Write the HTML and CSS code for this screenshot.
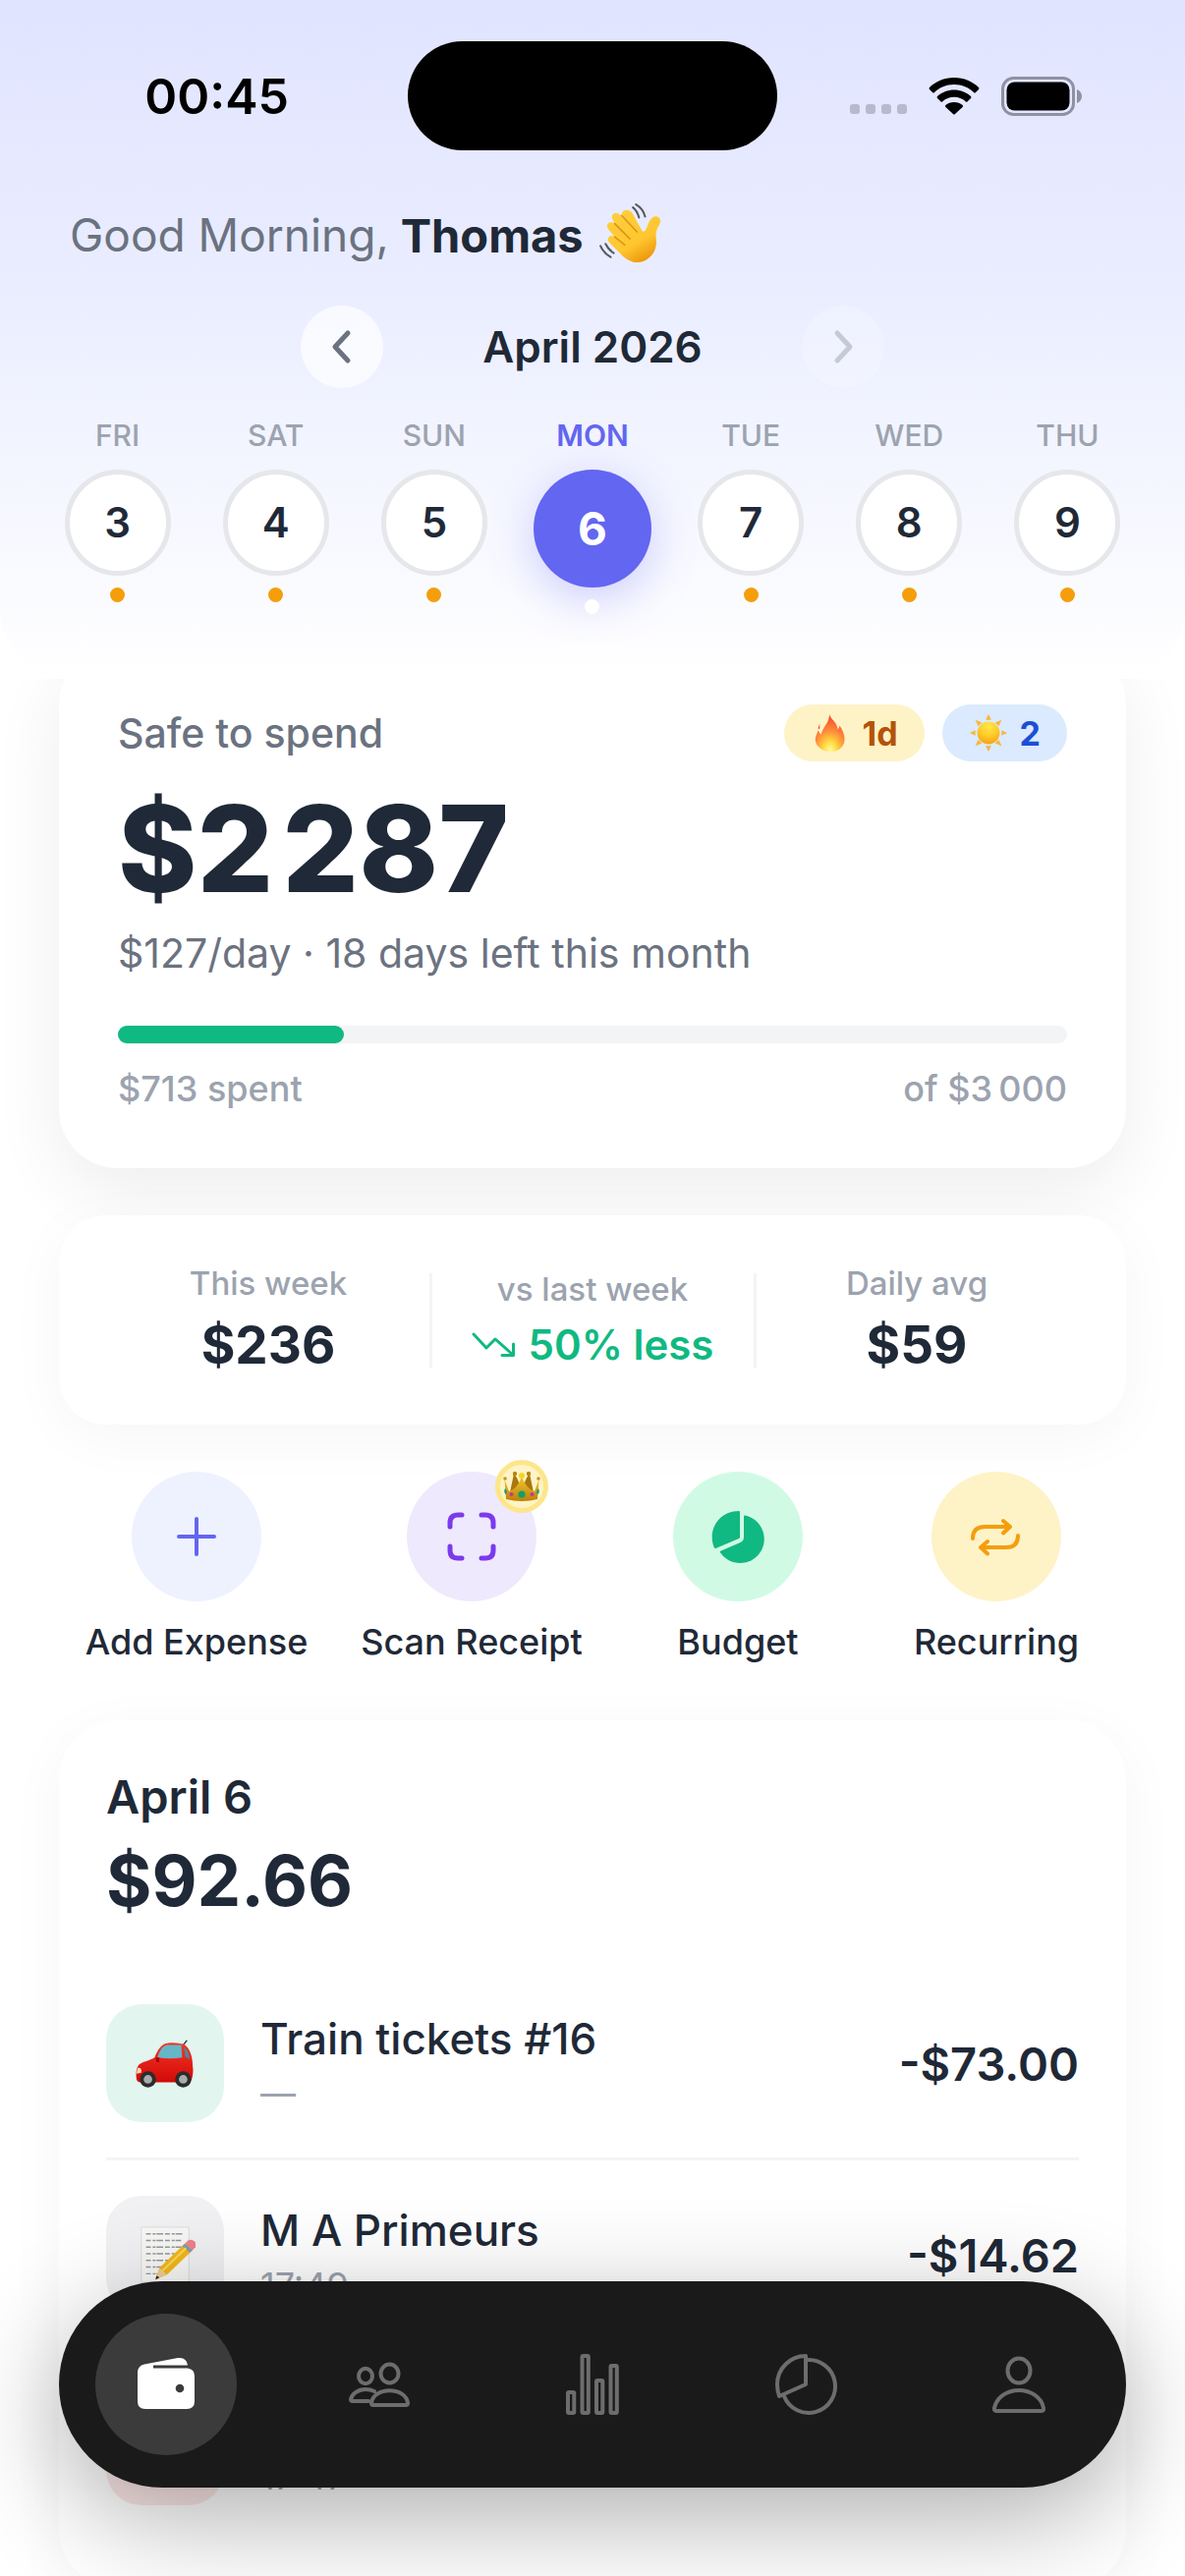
FILE: index.html
```html
<!DOCTYPE html>
<html lang="en">
<head>
<meta charset="utf-8">
<meta name="viewport" content="width=device-width, initial-scale=1">
<title>Safe to spend</title>
<link rel="stylesheet" href="styles.css">
</head>
<body>
<div class="app">
  <header class="header">
    <div class="header-bg">
      <div class="status">
        <time class="status-time">00:45</time>
        <div class="island"></div>
        <div class="status-icons">
          <span class="signal"><i></i><i></i><i></i><i></i></span>
          <svg class="wifi" viewBox="0 0 52 38" aria-hidden="true"><path d="M26 0C36 0 45 4 51 10q1 1 0 2l-3 3q-1 1-2 0C41 10 34 7 26 7S11 10 6 15q-1 1-2 0L1 12q-1-1 0-2C7 4 16 0 26 0Z"/><path d="M26 12.500c6.500 0 12.500 2.500 17 6.500q1 1 0 2l-3.300 3.300q-1 1-2 0C34.500 21.500 30.500 19.800 26 19.800s-8.500 1.700-11.700 4.500q-1 1-2 0L9 21q-1-1 0-2c4.500-4 10.500-6.500 17-6.500Z"/><path d="M26 25c3.400 0 6.400 1.200 8.600 3q1 1 0 2l-7.600 7q-1 1-2 0l-7.600-7q-1-1 0-2c2.200-1.800 5.200-3 8.600-3Z"/></svg>
          <svg class="battery" viewBox="0 0 82 40" aria-hidden="true"><rect x="1.500" y="1.500" width="72" height="37" rx="11" fill="none" stroke="#8f91a3" stroke-width="3"/><rect x="5.500" y="5.500" width="64" height="29" rx="8"/><path d="M77 13c3 1 5 4 5 7s-2 6-5 7Z" fill="#8f91a3"/></svg>
        </div>
      </div>
      <h1 class="greeting">Good Morning, <strong>Thomas</strong>
        <svg class="wave" viewBox="0 0 64 64" role="img" aria-label="waving hand"><defs><linearGradient id="hand" x1="0" y1="0" x2=".6" y2="1"><stop offset="0" stop-color="#ffd040"/><stop offset=".7" stop-color="#ffc62e"/><stop offset="1" stop-color="#f09a10"/></linearGradient></defs><g fill="none" stroke="#555962" stroke-width="2" stroke-linecap="round"><path d="M37 5q4 3 6 10M40 2q7 4 9 12M10 41q3 6 8 9M5 43q3 7 10 11"/></g><path d="M46 28q1 1 3 0c2-2 2-5 4-9 2-4 5-6 8-5 3 1 4 4 2 8-3 5-4 9-3 15 1 11-6 20-16 22-7 1-12-2-17-6L14 40c-4-4 0-9 5-6l-6-7c-4-5 1-10 6-6l-2-4c-3-5 3-9 7-5l2 1c-1-5 6-8 10-3Z" fill="url(#hand)"/><path d="M19 34l10 8M19 21l15 15M26 13l15 16" stroke="#dc9417" stroke-width="1.500" stroke-linecap="round"/></svg>
      </h1>
      <div class="month">
        <button class="month-btn" type="button" aria-label="Previous week"><svg viewBox="0 0 36 36"><path d="M24 4 11 18l13 14"/></svg></button>
        <h2 class="month-name">April 2026</h2>
        <button class="month-btn" type="button" aria-label="Next week" disabled><svg viewBox="0 0 36 36"><path d="m12 4 13 14-13 14"/></svg></button>
      </div>
      <div class="week">
        <button class="day" type="button"><span class="day-name">FRI</span><span class="day-num">3</span><i class="day-dot"></i></button>
        <button class="day" type="button"><span class="day-name">SAT</span><span class="day-num">4</span><i class="day-dot"></i></button>
        <button class="day" type="button"><span class="day-name">SUN</span><span class="day-num">5</span><i class="day-dot"></i></button>
        <button class="day day-active" type="button" aria-current="date"><span class="day-name">MON</span><span class="day-num">6</span><i class="day-dot"></i></button>
        <button class="day" type="button"><span class="day-name">TUE</span><span class="day-num">7</span><i class="day-dot"></i></button>
        <button class="day" type="button"><span class="day-name">WED</span><span class="day-num">8</span><i class="day-dot"></i></button>
        <button class="day" type="button"><span class="day-name">THU</span><span class="day-num">9</span><i class="day-dot"></i></button>
      </div>
    </div>
  </header>

  <main class="content">
    <section class="card summary">
      <div class="summary-top">
        <h2 class="summary-title">Safe to spend</h2>
        <div class="badges">
          <span class="badge badge-fire">
            <svg class="badge-icon" viewBox="0 0 42 42" role="img" aria-label="streak"><defs><radialGradient id="fire" cx=".5" cy=".95" r=".95"><stop offset="0" stop-color="#fff9a0"/><stop offset=".25" stop-color="#ffd83b"/><stop offset=".55" stop-color="#ff8a3a"/><stop offset="1" stop-color="#f4402a"/></radialGradient></defs><path d="M20 1c1 5 8 8 9 16 1-1 2-3 2-4 4 6 6 12 5 17-1 7-7 11-15 11S6 36 5 29c0-5 2-7 3-11 1 2 2 3 3 5 2-9 9-12 9-22Z" fill="url(#fire)"/><path d="M10 11q-2 3-2 6l2-1q-1-2 0-5Z" fill="#f4402a"/></svg>
            1d
          </span>
          <span class="badge badge-sun">
            <svg class="badge-icon" viewBox="0 0 42 42" role="img" aria-label="sun"><defs><radialGradient id="sun" cx=".5" cy=".2" r=".9"><stop offset="0" stop-color="#ffe94a"/><stop offset=".5" stop-color="#ffc928"/><stop offset="1" stop-color="#f29a0c"/></radialGradient></defs><circle cx="21" cy="21" r="12" fill="url(#sun)"/><path d="m21 1 3 6h-6ZM21 41l3-6h-6ZM1 21l6-3v6ZM41 21l-6-3v6ZM7 7l7 3-4 4ZM35 7l-7 3 4 4ZM7 35l7-3-4-4ZM35 35l-7-3 4-4Z" fill="#f6b73a"/></svg>
            2
          </span>
        </div>
      </div>
      <p class="summary-amount">$2&#8202;287</p>
      <p class="summary-note">$127/day · 18 days left this month</p>
      <div class="bar" role="progressbar" aria-label="Budget used" aria-valuemin="0" aria-valuemax="3000" aria-valuenow="713"><div class="bar-fill" style="width: 23.8%"></div></div>
      <div class="bar-labels"><span>$713 spent</span><span>of $3&#8239;000</span></div>
    </section>

    <section class="card stats">
      <div class="stat"><span class="stat-label">This week</span><strong class="stat-value">$236</strong></div>
      <div class="stat"><span class="stat-label">vs last week</span><strong class="stat-value stat-trend"><svg class="trend" viewBox="0 0 44 26" aria-hidden="true"><path d="m2 2 13 14 9-9 18 16M31 23.500h11.500V12"/></svg>50% less</strong></div>
      <div class="stat"><span class="stat-label">Daily avg</span><strong class="stat-value">$59</strong></div>
    </section>

    <section class="actions">
      <button class="action" type="button">
        <span class="action-icon action-add"><svg class="icon" viewBox="0 0 72 72"><path d="M36 18v36M18 36h36"/></svg></span>Add Expense
      </button>
      <button class="action" type="button">
        <span class="action-icon action-scan"><svg class="icon" viewBox="0 0 72 72"><path d="M14 26v-4q0-8 8-8h4M46 14h4q8 0 8 8v4M58 46v4q0 8-8 8h-4M26 58h-4q-8 0-8-8v-4"/></svg>
          <span class="crown"><svg viewBox="0 0 38 32" role="img" aria-label="premium"><defs><linearGradient id="gold" x1="0" x2="0" y1="0" y2="1"><stop offset="0" stop-color="#f3c72c"/><stop offset="1" stop-color="#b98208"/></linearGradient></defs><path d="M7 22 11 3q7 8 5 16ZM31 22 27 3q-7 8-5 16Z" fill="#a9770c"/><circle cx="12" cy="3" r="2.200" fill="#b8860b"/><circle cx="26" cy="3" r="2.200" fill="#b8860b"/><circle cx="2" cy="8" r="1.800" fill="#c8930e"/><circle cx="36" cy="8" r="1.800" fill="#c8930e"/><path d="M1.500 9 6 21q8-2 13-15 5 13 13 15l4.500-12L35 29q-16 4-32 0Z" fill="url(#gold)"/><circle cx="19" cy="5" r="3" fill="#f5d51f"/><circle cx="19" cy="24" r="3.600" fill="#0e9f70"/><circle cx="8.500" cy="24" r="2" fill="#c832a0"/><circle cx="29.500" cy="24" r="2" fill="#c832a0"/><path d="M2 18q3 3 1 6-3-2-1-6ZM36 18q-3 3-1 6 3-2 1-6Z" fill="#0e9f70"/></svg></span>
        </span>Scan Receipt
      </button>
      <button class="action" type="button">
        <span class="action-icon action-budget"><svg class="icon" viewBox="0 0 72 72"><path d="M38 11q0-1-1-1C21 10 9.700 22 9.700 36.500c0 4 .8 8 2.300 11q.5 1 1.500.5L37 38q1-.5 1-1.500Z"/><path d="M42 15.500q0-1.200 1.500-.9A24.500 24.500 0 1 1 18 52.300q-.7-1 .3-1.500L38.500 42q3.500-1.500 3.500-5.500Z"/></svg></span>Budget
      </button>
      <button class="action" type="button">
        <span class="action-icon action-recurring"><svg class="icon" viewBox="0 0 72 72"><path d="M12 38c0-8 4-12 12-12h25M43 20l7 6-7 6.500M58 35c0 8-4 12-12 12H21M27 41l-7 6 7 6.500"/></svg></span>Recurring
      </button>
    </section>

    <section class="card day-card">
      <h2 class="day-title">April 6</h2>
      <p class="day-total">$92.66</p>
      <ul class="items">
        <li class="item">
          <span class="item-icon item-green"><svg viewBox="0 0 64 52" role="img" aria-label="car"><defs><linearGradient id="car" x1="0" x2="0" y1="0" y2="1"><stop offset="0" stop-color="#f4362a"/><stop offset="1" stop-color="#d10a05"/></linearGradient></defs><path d="M51 7l4-5" stroke="#444" stroke-width="1.500"/><path d="M2 43c-1-8 0-15 5-17 4-2 11-4 14-6C24 12 28 6 34 5c8-1 15 0 19 2 5 4 8 12 8 22 1 5 0 11-1 14q-1 3-4 3H6q-3 0-4-3Z" fill="url(#car)"/><path d="M24 20c2-7 5-12 10-13h15l1 13q-12 2-26 0Z" fill="#66b6c6"/><path d="M52 9c4 3 5 7 6 13l-5-3Z" fill="#4b8a9a"/><path d="M22 20h4v5h-3Z" fill="#a90603"/><path d="M3 31q5-1 4 5l-5 1Z" fill="#ffd5b0"/><circle cx="14" cy="43" r="8.500" fill="#2c2c2e"/><circle cx="14" cy="43" r="4.500" fill="#a9abad"/><circle cx="51" cy="43" r="8.500" fill="#2c2c2e"/><circle cx="51" cy="43" r="4.500" fill="#a9abad"/></svg></span>
          <span class="item-text"><span class="item-name">Train tickets #16</span><span class="item-time">—</span></span>
          <span class="item-amount">-$73.00</span>
        </li>
        <li class="item">
          <span class="item-icon item-gray"><svg viewBox="0 0 64 64" role="img" aria-label="note"><path d="M7 3h50v58H7Z" fill="#f7f7f5" stroke="#dcdcdc"/><path d="M12 10h39M12 17h37M12 24h38M12 31h34M12 38h24M12 45h18M12 52h14" stroke="#96979a" stroke-width="1.500" stroke-dasharray="5 2 3 1 7 2"/><path d="m22 58 4-12 27-26 8 7-27 26Z" fill="#f3b719"/><path d="m53 20 3-3q4-2 7 1t1 6l-3 3Z" fill="#ef8288"/><path d="m50 23 3-3 8 7-3 3Z" fill="#8b9aa5"/><path d="m22 58 4-12 8 7Z" fill="#edcc96"/><path d="m22 58 1-4 3 2Z" fill="#222"/><path d="m29 49 25-24" stroke="#ffd95a" stroke-width="2"/></svg></span>
          <span class="item-text"><span class="item-name">M A Primeurs</span><span class="item-time">17:49</span></span>
          <span class="item-amount">-$14.62</span>
        </li>
        <li class="item">
          <span class="item-icon item-red"></span>
          <span class="item-text"><span class="item-name">&nbsp;</span><span class="item-time">17:47</span></span>
        </li>
      </ul>
    </section>
  </main>

  <nav class="tabs" aria-label="Main">
    <a class="tab tab-active" href="#wallet" aria-label="Wallet" aria-current="page"><svg class="icon" viewBox="0 0 72 72"><path d="M7 24q0-7 7-8.500L48 9q9-1 10 7.500H23v3h35q7 1 7 8V53q0 8-8 8H15q-8 0-8-8Z"/><circle class="tab-hole" cx="50" cy="40" r="4.300"/></svg></a>
    <a class="tab" href="#groups" aria-label="Groups"><svg class="icon" viewBox="0 0 72 72"><ellipse cx="22" cy="27.500" rx="7" ry="7.700"/><ellipse cx="46.500" cy="25" rx="9" ry="9.500"/><path d="M31 43q-4-2-9-2C14 41 8 46 7 51q0 2 2 2h16M30 57h33q2 0 2-2c-1-8-9-12.700-18.500-12.700S29 47 28 55q0 2 2 2Z"/></svg></a>
    <a class="tab" href="#stats" aria-label="Statistics"><svg class="icon" viewBox="0 0 72 72"><rect x="11" y="44" width="6.300" height="21" rx="1"/><rect x="25.500" y="7" width="6.300" height="58" rx="1"/><rect x="40" y="32" width="6.300" height="33" rx="1"/><rect x="54.500" y="17" width="6.300" height="48" rx="1"/></svg></a>
    <a class="tab" href="#budget" aria-label="Budget"><svg class="icon" viewBox="0 0 72 72"><path d="M36 36V7C20 7 7 20 7 36c0 4 .7 8 2 12Z"/><path d="M37 11A27 27 0 1 1 14 48"/></svg></a>
    <a class="tab" href="#profile" aria-label="Profile"><svg class="icon" viewBox="0 0 72 72"><ellipse cx="36" cy="22" rx="11.500" ry="12.500"/><path d="M13 63h46q2.500 0 2-3C59 49 48 42 36 42S13 49 11 60q-.5 3 2 3Z"/></svg></a>
  </nav>
</div>
</body>
</html>
```
FILE: styles.css
```css
* { box-sizing: border-box; }

body {
  margin: 0;
  background: #fff;
  color: #1f2937;
  font-family: Inter, "Noto Sans", sans-serif;
}

h1, h2, p, ul { margin: 0; padding: 0; }
ul { list-style: none; }
svg { display: block; }
button {
  border: 0;
  padding: 0;
  background: none;
  color: inherit;
  font: inherit;
}

.app {
  position: relative;
  display: flex;
  flex-direction: column;
  height: 100vh;
  overflow: hidden;
}

/* Header */
.header {
  position: relative;
  z-index: 1;
  flex: none;
  background: #fff;
}
.header-bg {
  padding: 42px 39px 66px;
  border-radius: 0 0 72px 72px;
  background: linear-gradient(#e0e4ff, #ebeeff 45%, #fff);
}

.status {
  display: grid;
  grid-template-columns: 1fr 376px 1fr;
  align-items: center;
  margin: 0 -39px 56px;
}
.status-time {
  padding-right: 121px;
  color: #000;
  font-size: 50px;
  font-weight: 600;
  text-align: right;
}
.island {
  height: 111px;
  border-radius: 56px;
  background: #000;
}
.status-icons {
  display: flex;
  align-items: center;
  gap: 22px;
  padding-left: 74px;
}
.signal {
  display: flex;
  gap: 6px;
  padding-top: 27px;
}
.signal i {
  width: 10px;
  height: 10px;
  border-radius: 3px;
  background: #b7bacf;
}
.wifi { width: 52px; height: 38px; }
.battery { width: 82px; height: 40px; }

.greeting {
  display: flex;
  align-items: center;
  gap: 12px;
  height: 60px;
  padding: 0 32px;
  color: #6b7280;
  font-size: 46px;
  font-weight: 400;
}
.greeting strong {
  color: #1f2937;
  font-size: 47px;
  font-weight: 700;
}
.wave { width: 66px; height: 66px; }

.month {
  display: flex;
  align-items: center;
  justify-content: center;
  margin: 42px 0 30px;
}
.month-name {
  width: 426px;
  font-size: 44px;
  font-weight: 600;
  text-align: center;
}
.month-btn {
  display: grid;
  place-items: center;
  width: 84px;
  height: 84px;
  border-radius: 50%;
  background: rgba(255, 255, 255, .7);
}
.month-btn:disabled { opacity: .3; }
.month-btn svg {
  width: 36px;
  height: 36px;
  fill: none;
  stroke: #6b7280;
  stroke-width: 5;
  stroke-linecap: round;
  stroke-linejoin: round;
}

.week {
  display: grid;
  grid-template-columns: repeat(7, 1fr);
  align-items: start;
}
.day {
  display: flex;
  flex-direction: column;
  align-items: center;
}
.day-name {
  margin-bottom: 17px;
  color: #9ca3af;
  font-size: 30px;
  font-weight: 500;
  line-height: 36px;
}
.day-num {
  display: grid;
  place-items: center;
  width: 108px;
  height: 108px;
  border: 5px solid #e5e7eb;
  border-radius: 50%;
  background: #fff;
  font-size: 42px;
  font-weight: 600;
  line-height: 50px;
}
.day-dot {
  width: 15px;
  height: 15px;
  margin-top: 12px;
  border-radius: 50%;
  background: #f59e0b;
}
.day-active .day-name { color: #6366f1; font-weight: 600; }
.day-active .day-num {
  width: 120px;
  height: 120px;
  border: 0;
  background: #6366f1;
  box-shadow: 0 12px 48px rgba(99, 102, 241, .3);
  color: #fff;
  font-size: 46px;
  font-weight: 700;
}
.day-active .day-dot { z-index: 1; background: #fff; }

/* Scrolled content */
.content {
  flex: 1;
  min-height: 0;
  margin-top: -34px;
  padding: 0 60px;
  overflow-y: auto;
  scrollbar-width: none;
}
.card {
  border-radius: 60px;
  background: #fff;
  box-shadow: 0 12px 60px rgba(0, 0, 0, .04);
}

.summary {
  padding: 60px;
  box-shadow: 0 24px 72px rgba(0, 0, 0, .07);
}
.summary-top {
  display: flex;
  align-items: center;
  justify-content: space-between;
}
.summary-title {
  color: #6b7280;
  font-size: 41px;
  font-weight: 500;
  line-height: 58px;
}
.badges { display: flex; gap: 18px; }
.badge {
  display: flex;
  align-items: center;
  gap: 12px;
  height: 58px;
  padding: 0 27px;
  border-radius: 29px;
  font-size: 34px;
  font-weight: 700;
}
.badge-icon { width: 40px; height: 40px; }
.badge-fire { background: #fef3c7; color: #b45309; }
.badge-sun { background: #dbeafe; color: #1d4ed8; }
.summary-amount {
  margin-top: 29px;
  font-size: 122px;
  font-weight: 800;
  line-height: 120px;
}
.summary-note {
  margin-top: 22px;
  color: #6b7280;
  font-size: 41px;
  line-height: 48px;
}
.bar {
  height: 18px;
  margin-top: 50px;
  border-radius: 9px;
  background: #f3f4f6;
}
.bar-fill {
  height: 18px;
  border-radius: 9px;
  background: #10b981;
}
.bar-labels {
  display: flex;
  justify-content: space-between;
  margin-top: 25px;
  color: #9ca3af;
  font-size: 36px;
  font-weight: 500;
  line-height: 42px;
}

.stats {
  display: grid;
  grid-template-columns: repeat(3, 1fr);
  align-items: center;
  margin-top: 48px;
  padding: 50px 48px;
  border-radius: 48px;
}
.stat {
  position: relative;
  display: flex;
  flex-direction: column;
  align-items: center;
  gap: 13px;
}
.stat + .stat::before {
  content: "";
  position: absolute;
  top: 50%;
  left: -1px;
  width: 3px;
  height: 96px;
  margin-top: -48px;
  background: #f3f4f6;
}
.stat-label {
  color: #9ca3af;
  font-size: 33px;
  font-weight: 500;
  line-height: 38px;
}
.stat-value {
  font-size: 53px;
  font-weight: 700;
  line-height: 62px;
}
.stat-trend {
  display: flex;
  align-items: center;
  gap: 14px;
  color: #10b981;
  font-size: 42px;
  font-weight: 600;
  line-height: 50px;
}
.trend {
  width: 44px;
  height: 26px;
  fill: none;
  stroke: currentColor;
  stroke-width: 3;
  stroke-linecap: round;
  stroke-linejoin: round;
}

.actions {
  display: grid;
  grid-template-columns: 280fr 280fr 262fr 264fr;
  margin: 48px 0 59px;
}
.action {
  display: flex;
  flex-direction: column;
  align-items: center;
  gap: 20px;
  font-size: 36px;
  font-weight: 500;
  line-height: 42px;
  white-space: nowrap;
}
.action-icon {
  position: relative;
  display: grid;
  place-items: center;
  width: 132px;
  height: 132px;
  border-radius: 50%;
}
.icon {
  width: 72px;
  height: 72px;
  fill: none;
  stroke: currentColor;
  stroke-width: 4;
  stroke-linecap: round;
  stroke-linejoin: round;
}
.action-add { background: #eef2ff; color: #6366f1; }
.action-scan { background: #efe9fe; color: #7c3aed; }
.action-scan .icon { stroke-width: 5; }
.action-budget { background: #d1fae5; color: #10b981; }
.action-budget .icon { fill: currentColor; stroke: none; }
.action-recurring { background: #fef3c7; color: #f59e0b; }
.crown {
  position: absolute;
  top: -12px;
  right: -12px;
  display: grid;
  place-items: center;
  width: 54px;
  height: 54px;
  border: 5px solid #fde68a;
  border-radius: 50%;
  background: #fef3c7;
}
.crown svg { width: 38px; height: 32px; }

.day-card { padding: 49px 48px; }
.day-title {
  font-size: 47px;
  font-weight: 600;
  line-height: 58px;
}
.day-total {
  margin: 14px 0 48px;
  font-size: 71px;
  font-weight: 700;
  line-height: 84px;
}
.item {
  display: flex;
  align-items: center;
  gap: 37px;
  padding: 36px 0;
  border-bottom: 3px solid #f3f4f6;
}
.item:last-child { border: 0; }
.item-icon {
  display: grid;
  place-items: center;
  width: 120px;
  height: 120px;
  border-radius: 36px;
}
.item-icon svg { width: 62px; height: 62px; }
.item-green { background: #e2f6ef; }
.item-gray { background: #f1f1f4; }
.item-red { background: #fde8e8; }
.item-text {
  display: flex;
  flex: 1;
  flex-direction: column;
  gap: 8px;
}
.item-name {
  font-size: 44px;
  font-weight: 500;
  line-height: 54px;
}
.item-time {
  color: #9ca3af;
  font-size: 36px;
  line-height: 42px;
}
.item-amount {
  font-size: 47px;
  font-weight: 600;
}

/* Floating tab bar */
.tabs {
  position: absolute;
  right: 60px;
  bottom: 90px;
  left: 60px;
  z-index: 2;
  display: grid;
  grid-template-columns: repeat(5, 1fr);
  place-items: center;
  height: 210px;
  border-radius: 105px;
  background: #1a1a1a;
  box-shadow: 0 30px 108px rgba(0, 0, 0, .32);
}
.tab {
  display: grid;
  place-items: center;
  width: 144px;
  height: 144px;
  border-radius: 50%;
  color: #6d6d6d;
}
.tab-active { background: #3b3b3b; color: #fff; }
.tab-active .icon { fill: currentColor; stroke: none; }
.tab-active .tab-hole { fill: #3b3b3b; }
```
